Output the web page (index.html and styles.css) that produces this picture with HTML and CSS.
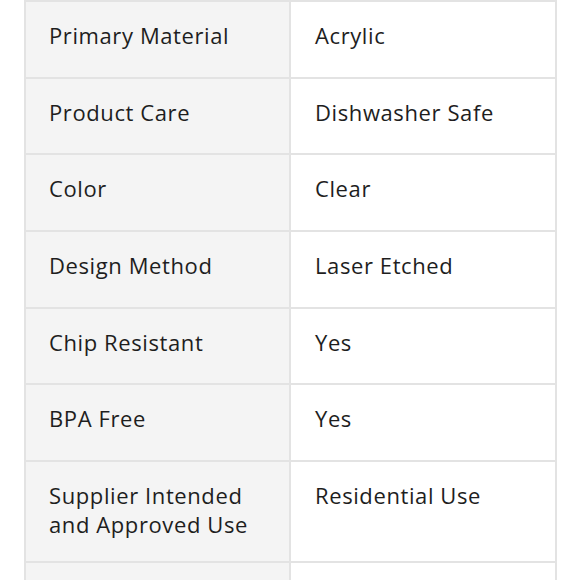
FILE: index.html
```html
<!DOCTYPE html>
<html lang="en">
<head>
<meta charset="utf-8">
<title>Specifications</title>
<link rel="stylesheet" href="styles.css">
</head>
<body>
<table class="specs">
  <tbody>
    <tr><th class="specs-name">Primary Material</th><td class="specs-value">Acrylic</td></tr>
    <tr><th class="specs-name">Product Care</th><td class="specs-value">Dishwasher Safe</td></tr>
    <tr><th class="specs-name">Color</th><td class="specs-value">Clear</td></tr>
    <tr><th class="specs-name">Design Method</th><td class="specs-value">Laser Etched</td></tr>
    <tr><th class="specs-name">Chip Resistant</th><td class="specs-value">Yes</td></tr>
    <tr><th class="specs-name">BPA Free</th><td class="specs-value">Yes</td></tr>
    <tr><th class="specs-name">Supplier Intended and Approved Use</th><td class="specs-value">Residential Use</td></tr>
    <tr><th class="specs-name"></th><td class="specs-value"></td></tr>
  </tbody>
</table>
</body>
</html>
```

FILE: styles.css
```css
html, body {
  margin: 0;
  padding: 0;
  background: #ffffff;
}

body {
  font-family: "Open Sans", Lato, sans-serif;
  color: #1e1e1e;
}

.specs {
  margin-left: 24px;
  border-collapse: separate;
  border-spacing: 2px;
  background: #e3e3e3;
  table-layout: fixed;
  width: 533px;
}

.specs-name,
.specs-value {
  height: 74.7px;
  font-size: 22px;
  line-height: 29px;
  letter-spacing: 0.6px;
  font-weight: 400;
  text-align: left;
  vertical-align: top;
  padding: 19px 22px 22px 23px;
  box-sizing: border-box;
}

.specs-name {
  width: 263px;
  background: #f4f4f4;
}

.specs-value {
  width: 264px;
  background: #ffffff;
  padding-left: 24px;
}
```
